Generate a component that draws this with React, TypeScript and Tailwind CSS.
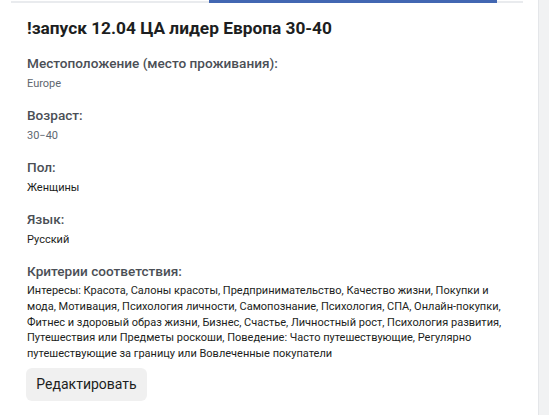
import React from 'react';

const rows = [
  { label: 'Местоположение (место проживания):', value: 'Europe', muted: true },
  { label: 'Возраст:', value: '30−40', muted: true },
  { label: 'Пол:', value: 'Женщины', muted: false },
  { label: 'Язык:', value: 'Русский', muted: false },
];

export default function App() {
  return (
    <div className="flex h-[415px] w-[549px] bg-white font-['Roboto',sans-serif]">
      <div className="relative flex-1 pl-[27px] pr-4">
        {/* top tab line */}
        <div className="absolute left-[11px] top-[1px] h-[2px] w-[512px] bg-[#e9ebee]" />
        <div className="absolute left-[209px] top-0 h-[3px] w-[288px] bg-[#4267b2]" />

        <h1 className="pt-[17px] text-[17.3px] font-bold leading-[22px] text-[#1c1e21]">
          !запуск 12.04 ЦА лидер Европа 30-40
        </h1>

        <div className="mt-[14px] flex flex-col gap-[12px]">
          {rows.map((r, i) => (
            <div key={i}>
              <div className="text-[13.6px] font-medium leading-[20px] text-[#4b4f56]">{r.label}</div>
              <div
                className={
                  'mt-[1px] text-[11px] leading-[19px] ' + (r.muted ? 'text-[#606770]' : 'text-[#1c1e21]')
                }
              >
                {r.value}
              </div>
            </div>
          ))}
          <div>
            <div className="text-[13.6px] font-medium leading-[20px] text-[#4b4f56]">Критерии соответствия:</div>
            <p className="mt-[2px] w-[480px] text-[11px] leading-[15.75px] text-[#1c1e21]">
              Интересы: Красота, Салоны красоты, Предпринимательство, Качество жизни, Покупки и мода, Мотивация,
              Психология личности, Самопознание, Психология, СПА, Онлайн-покупки, Фитнес и здоровый образ жизни,
              Бизнес, Счастье, Личностный рост, Психология развития, Путешествия или Предметы роскоши, Поведение:
              Часто путешествующие, Регулярно путешествующие за границу или Вовлеченные покупатели
            </p>
          </div>
        </div>

        <button className="-ml-px mt-[6px] h-[33px] w-[121px] rounded-[6px] bg-[#f0f0f0] text-[14px] text-[#1c1e21]">
          Редактировать
        </button>
      </div>
      <div className="w-[11px] border-l border-[#e4e6e9] bg-[#f1f2f3]" />
    </div>
  );
}
